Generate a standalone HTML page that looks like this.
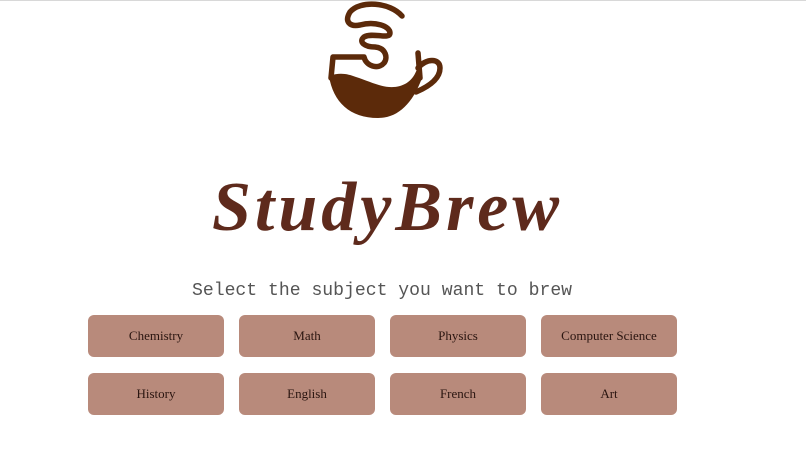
<!DOCTYPE html>
<html><head><meta charset="utf-8"><style>
html,body{margin:0;padding:0;background:#fff;width:806px;height:456px;overflow:hidden;position:relative}
.top{position:absolute;left:0;top:0;width:806px;height:1px;background:#d8d8d8}
.title{position:absolute;left:212px;top:168px;width:360px;font-family:"Liberation Serif",serif;font-style:italic;font-weight:bold;font-size:70px;color:#5e2a1c;line-height:80px;white-space:nowrap;letter-spacing:4px}
.sub{position:absolute;left:192px;top:281px;font-family:"Liberation Mono",monospace;font-size:18.1px;color:#555;white-space:nowrap}
.b{position:absolute;width:136px;height:42px;background:#b88a7b;border-radius:6px;font-family:"Liberation Serif",serif;font-size:13px;color:#2a1510;display:flex;align-items:center;justify-content:center}
</style></head><body>
<div class="top"></div>
<svg style="position:absolute;left:0;top:0" width="806" height="130">
<g fill="none" stroke="#5c2a0a" stroke-width="5.5" stroke-linecap="round" stroke-linejoin="round">
<path d="M402,16 C390,2 360,0 350,12 C344,22 350,27 360,25 C375,21 390,26 390,33 C390,40 372,32 364,37 C358,42 365,47 375,47 C386,48 388,58 384,63 C378,70 366,66 364,57 L333,57 L331,78"/>
<path d="M418,53 L420,78"/>
<path d="M418,68 C426,58 440,58 440,68 C440,78 430,86 416,92"/>
</g>
<path fill="#5c2a0a" d="M329,76 C340,72 348,74 356,77 C372,82 385,90 400,86 C410,83 416,76 419,62 L422,78 C412,105 397,118 378,118 C350,118 333,102 329,76 Z"/>
</svg>
<div class="title">StudyBrew</div>
<div class="sub">Select the subject you want to brew</div>
<div class="b" style="left:88px;top:315px">Chemistry</div>
<div class="b" style="left:239px;top:315px">Math</div>
<div class="b" style="left:390px;top:315px">Physics</div>
<div class="b" style="left:541px;top:315px">Computer Science</div>
<div class="b" style="left:88px;top:373px">History</div>
<div class="b" style="left:239px;top:373px">English</div>
<div class="b" style="left:390px;top:373px">French</div>
<div class="b" style="left:541px;top:373px">Art</div>
</body></html>
